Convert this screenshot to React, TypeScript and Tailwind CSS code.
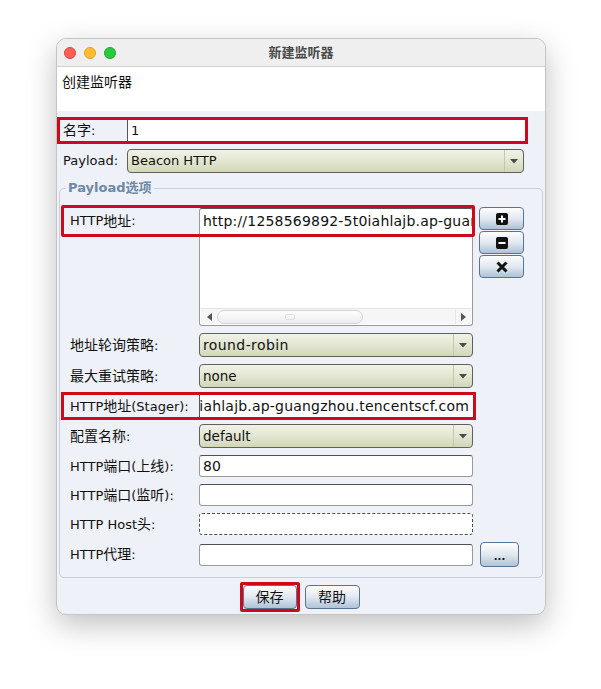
import React from "react";

const CJK_SPLIT = /([\u2e80-\u9fff\uf900-\ufaff\uff00-\uffef]+)/;
const CJK_TEST = /[\u2e80-\u9fff\uf900-\ufaff\uff00-\uffef]/;

const URL = "http://1258569892-5t0iahlajb.ap-guangzhou.tencentscf.com";

function T({ s }: { s: string }) {
  const parts = s.split(CJK_SPLIT).filter((p) => p !== "");
  return (
    <>
      {parts.map((p, i) =>
        CJK_TEST.test(p) ? (
          <span key={i} className="text-[14px]">
            {p}
          </span>
        ) : (
          <span key={i}>{p}</span>
        )
      )}
    </>
  );
}

function Field({ children, dashed }: { children?: React.ReactNode; dashed?: boolean }) {
  return (
    <div
      className={
        dashed
          ? "h-[22px] w-full flex items-center px-[3px] rounded-[3px] border border-dashed border-[#4d4d4d] bg-white whitespace-nowrap overflow-hidden"
          : "h-[22px] w-full flex items-center px-[3px] rounded-[3px] border border-[#9a9a9a] border-t-[#505050] bg-white whitespace-nowrap overflow-hidden"
      }
    >
      {children}
    </div>
  );
}

function Select({ children }: { children: React.ReactNode }) {
  return (
    <div className="h-[24px] w-full flex rounded-[4px] border border-[#5f5f5f] bg-linear-to-b from-[#f0f2e6] via-[#e3e6d1] to-[#d2d7b8] overflow-hidden">
      <div className="flex-1 flex items-center pl-[3px] whitespace-nowrap overflow-hidden">{children}</div>
      <div className="w-[19px] flex items-center justify-center border-l border-[#c3c6b0]">
        <svg width="8" height="5" viewBox="0 0 8 5">
          <path d="M0 0H8L4 4.5Z" fill="#4a4a4a" />
        </svg>
      </div>
    </div>
  );
}

function ArrowLeft() {
  return (
    <svg width="5" height="8" viewBox="0 0 5 8">
      <path d="M5 0V8L0 4Z" fill="#555" />
    </svg>
  );
}

function ArrowRight() {
  return (
    <svg width="5" height="8" viewBox="0 0 5 8">
      <path d="M0 0V8L5 4Z" fill="#555" />
    </svg>
  );
}

export default function App() {
  return (
    <div className="w-[601px] h-[689px] bg-white pt-[38px] pl-[56px] text-[13px] text-[#111] font-['DejaVu_Sans','Noto_Sans_CJK_SC',sans-serif]">
      <div className="w-[490px] h-[577px] flex flex-col rounded-[10px] border border-[#c4c4c4] bg-[#eef1f7] overflow-hidden shadow-[0_10px_30px_rgba(0,0,0,0.25)]">
        {/* Title bar */}
        <div className="h-[28px] shrink-0 grid grid-cols-[1fr_auto_1fr] items-center bg-[#efefef] border-b border-[#d2d2d2]">
          <div className="flex gap-[8px] pl-[7px]">
            <span className="w-[12px] h-[12px] rounded-full bg-[#fe5f57] border border-[#e0443e]" />
            <span className="w-[12px] h-[12px] rounded-full bg-[#febc2e] border border-[#dea123]" />
            <span className="w-[12px] h-[12px] rounded-full bg-[#28c840] border border-[#1aab29]" />
          </div>
          <div className="font-bold text-[13px] text-[#4a4a4a]">新建监听器</div>
          <div />
        </div>

        {/* Header */}
        <div className="h-[44px] shrink-0 bg-white pl-[5px] pt-[5px]">
          <T s="创建监听器" />
        </div>

        {/* Top rows */}
        <div className="pl-[6px] pr-[20px] pt-[9px] flex flex-col gap-[8px]">
          <div className="h-[21px] flex items-center -ml-[3px] pl-[3px] outline-3 outline-solid outline-[#cc0a1c]">
            <div className="w-[64px] shrink-0">
              <T s="名字:" />
            </div>
            <div className="flex-1 h-full flex items-center px-[3px] border-l border-[#555] bg-white">1</div>
          </div>
          <div className="h-[24px] flex items-center mr-[1px]">
            <div className="w-[64px] shrink-0">Payload:</div>
            <div className="flex-1">
              <Select>Beacon HTTP</Select>
            </div>
          </div>
        </div>

        {/* Payload options group */}
        <fieldset className="mx-[2px] mt-[7px] border border-[#c6cfdb] rounded-[5px]">
          <legend className="ml-[6px] px-[2px] font-bold text-[13px] leading-[16px] text-[#6c89a7]">Payload选项</legend>
          <div className="pl-[10px] pr-[18px] pt-[12px] pb-[10px] flex flex-col gap-[7px]">
            {/* HTTP地址 list */}
            <div className="relative flex h-[118px]">
              <div className="absolute left-[-9px] top-[-3px] w-[414px] h-[32px] border-[3px] rounded-[2px] border-[#cc0a1c] pointer-events-none z-10" />
              <div className="w-[129px] h-[26px] flex items-center shrink-0">
                <T s="HTTP地址:" />
              </div>
              <div className="w-[274px] shrink-0 h-full flex flex-col rounded-[3px] border border-[#9a9a9a] border-t-[#555] bg-white overflow-hidden">
                <div className="flex-1 pl-[3px] overflow-hidden">
                  <div className="h-[25px] flex items-center whitespace-nowrap text-[14px] tracking-[0.2px]">{URL}</div>
                </div>
                <div className="h-[16px] mb-[1px] mx-[1px] flex items-center bg-[#f6f6f6] border-t border-[#e3e3e3]">
                  <div className="w-[16px] h-full flex items-center justify-center">
                    <ArrowLeft />
                  </div>
                  <div className="w-[146px] h-[14px] rounded-[7px] border border-[#d2d2d2] bg-linear-to-b from-[#fdfdfd] to-[#ededed] flex items-center justify-center">
                    <div className="w-[10px] h-[6px] rounded-[2px] border border-[#e0e0e0]" />
                  </div>
                  <div className="flex-1" />
                  <div className="w-[16px] h-full flex items-center justify-center border-l border-[#e6e6e6]">
                    <ArrowRight />
                  </div>
                </div>
              </div>
              <div className="ml-[6px] flex-1 flex flex-col gap-[1px] -mt-[1px]">
                <div className="h-[23px] rounded-[4px] border border-[#5a7490] bg-linear-to-b from-[#fdfdfe] via-[#e2e8ef] to-[#aec3d8] flex items-center justify-center">
                  <svg width="12" height="12" viewBox="0 0 12 12">
                    <rect width="12" height="12" rx="2" fill="#111" />
                    <path d="M6 2.5v7M2.5 6h7" stroke="#fff" strokeWidth="2" />
                  </svg>
                </div>
                <div className="h-[23px] rounded-[4px] border border-[#5a7490] bg-linear-to-b from-[#fdfdfe] via-[#e2e8ef] to-[#aec3d8] flex items-center justify-center">
                  <svg width="12" height="12" viewBox="0 0 12 12">
                    <rect width="12" height="12" rx="2" fill="#111" />
                    <path d="M2.5 6h7" stroke="#fff" strokeWidth="2" />
                  </svg>
                </div>
                <div className="h-[23px] rounded-[4px] border border-[#5a7490] bg-linear-to-b from-[#fdfdfe] via-[#e2e8ef] to-[#aec3d8] flex items-center justify-center">
                  <svg width="14" height="12" viewBox="0 0 14 12">
                    <path d="M2.5 1.5L11.5 10.5M11.5 1.5L2.5 10.5" stroke="#111" strokeWidth="3" />
                  </svg>
                </div>
              </div>
            </div>

            <div className="flex items-center h-[24px]">
              <div className="w-[129px] shrink-0">
                <T s="地址轮询策略:" />
              </div>
              <div className="w-[274px]">
                <Select>
                  <span className="text-[14px] tracking-[0.4px]">round-robin</span>
                </Select>
              </div>
            </div>

            <div className="flex items-center h-[24px]">
              <div className="w-[129px] shrink-0">
                <T s="最大重试策略:" />
              </div>
              <div className="w-[274px]">
                <Select>
                  <span className="text-[13.5px]">none</span>
                </Select>
              </div>
            </div>

            <div className="flex items-center h-[22px] self-start -ml-[6px] pl-[6px] outline-3 outline-solid outline-[#cc0a1c]">
              <div className="w-[129px] shrink-0">
                <T s="HTTP地址(Stager):" />
              </div>
              <div className="w-[274px] h-[22px] flex items-center justify-end pr-[4px] border-l border-[#555] bg-white whitespace-nowrap overflow-hidden">
                <span className="shrink-0 text-[14px] tracking-[0.2px]">{URL}</span>
              </div>
            </div>

            <div className="flex items-center h-[24px]">
              <div className="w-[129px] shrink-0">
                <T s="配置名称:" />
              </div>
              <div className="w-[274px]">
                <Select>
                  <span className="text-[13.5px]">default</span>
                </Select>
              </div>
            </div>

            <div className="flex items-center h-[22px]">
              <div className="w-[129px] shrink-0">
                <T s="HTTP端口(上线):" />
              </div>
              <div className="w-[274px]">
                <Field>
                  <span className="text-[14px]">80</span>
                </Field>
              </div>
            </div>

            <div className="flex items-center h-[22px]">
              <div className="w-[129px] shrink-0">
                <T s="HTTP端口(监听):" />
              </div>
              <div className="w-[274px]">
                <Field />
              </div>
            </div>

            <div className="flex items-center h-[22px]">
              <div className="w-[129px] shrink-0">
                <T s="HTTP Host头:" />
              </div>
              <div className="w-[274px]">
                <Field dashed />
              </div>
            </div>

            <div className="flex items-center h-[25px]">
              <div className="w-[129px] shrink-0">
                <T s="HTTP代理:" />
              </div>
              <div className="w-[274px]">
                <Field />
              </div>
              <div className="ml-[7px] w-[39px] h-[25px] rounded-[4px] border border-[#5a7490] bg-linear-to-b from-[#fdfdfe] via-[#e2e8ef] to-[#aec3d8] flex items-end justify-center pb-[4px] text-[10px] font-bold leading-none">
                ...
              </div>
            </div>
          </div>
        </fieldset>

        {/* Bottom buttons */}
        <div className="flex justify-center gap-[8px] mt-[7px]">
          <div className="-m-[3px] border-[3px] border-[#cc0a1c] rounded-[2px]">
            <div className="w-[54px] h-[24px] rounded-[4px] border border-[#5a7490] bg-linear-to-b from-[#fdfdfe] via-[#e2e8ef] to-[#aec3d8] flex items-center justify-center">
              <T s="保存" />
            </div>
          </div>
          <div className="w-[55px] h-[24px] rounded-[4px] border border-[#5a7490] bg-linear-to-b from-[#fdfdfe] via-[#e2e8ef] to-[#aec3d8] flex items-center justify-center">
            <T s="帮助" />
          </div>
        </div>
      </div>
    </div>
  );
}
